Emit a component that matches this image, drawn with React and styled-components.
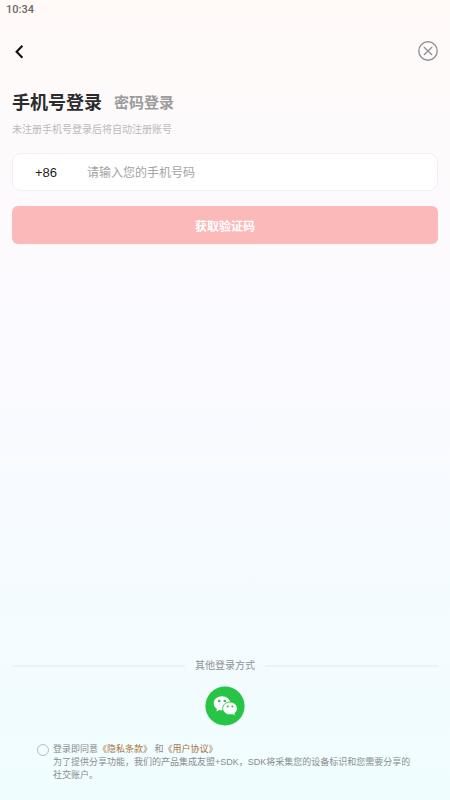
import React, { useState } from 'react';
import styled, { createGlobalStyle } from 'styled-components';

const App = () => {
    const [phone, setPhone] = useState('');
    const [agreed, setAgreed] = useState(false);
    return (
        <>
            <GlobalStyle />
            <Page>
                <StatusBar>10:34</StatusBar>
                <Nav>
                    <IconButton type="button" aria-label="返回">
                        <svg width="16" height="20" viewBox="0 0 16 20" fill="none" stroke="#111" strokeWidth="2.1">
                            <path d="M10.4 4.8 4.6 10.8l5.8 6" />
                        </svg>
                    </IconButton>
                    <IconButton type="button" aria-label="关闭">
                        <svg width="20" height="20" viewBox="0 0 20 20" fill="none" stroke="#939396" strokeWidth="1.4">
                            <circle cx="10" cy="10" r="9.2" />
                            <path d="m5.9 5.9 8.2 8.2M14.1 5.9l-8.2 8.2" />
                        </svg>
                    </IconButton>
                </Nav>
                <Form onSubmit={(e) => e.preventDefault()}>
                    <Tabs>
                        <Tab type="button" $active>手机号登录</Tab>
                        <Tab type="button">密码登录</Tab>
                    </Tabs>
                    <Hint>未注册手机号登录后将自动注册账号</Hint>
                    <PhoneField>
                        <label htmlFor="phone">+86</label>
                        <input
                            id="phone"
                            type="tel"
                            placeholder="请输入您的手机号码"
                            value={phone}
                            onChange={(e) => setPhone(e.target.value)}
                        />
                    </PhoneField>
                    <Submit type="submit">获取验证码</Submit>
                </Form>
                <Footer>
                    <Divider>其他登录方式</Divider>
                    <WechatButton type="button" aria-label="微信登录">
                        <WechatLogo />
                    </WechatButton>
                    <Agreement>
                        <input
                            id="agree"
                            type="checkbox"
                            checked={agreed}
                            onChange={(e) => setAgreed(e.target.checked)}
                        />
                        <label htmlFor="agree">
                            登录即同意<a href="#privacy">《隐私条款》</a> 和<a href="#terms">《用户协议》</a>
                            <br />
                            为了提供分享功能，我们的产品集成友盟+SDK，SDK将采集您的设备标识和您需要分享的社交账户。
                        </label>
                    </Agreement>
                </Footer>
            </Page>
        </>
    )
}

export default App

const WechatLogo = () => (
    <svg width="40" height="40" viewBox="0 0 40 40">
        <circle cx="20" cy="20" r="19.6" fill="#28c445" />
        <path
            fill="#fff"
            d="M17 10.2c-4.6 0-8.3 3.1-8.3 7 0 2.3 1.200 4.200 3.100 5.500l-.3 2.800 2.900-1.600c.8.200 1.700.3 2.600.3 4.600 0 8.300-3.100 8.300-7s-3.700-7-8.300-7z"
        />
        <path
            fill="#fff"
            stroke="#28c445"
            strokeWidth=".9"
            d="M32.300 22.400c0-3.600-3.300-6.400-7.300-6.400s-7.300 2.800-7.300 6.400 3.300 6.400 7.300 6.400c.9 0 1.700-.1 2.500-.4l2.800 1.700-.5-2.800c1.500-1.100 2.500-2.900 2.500-4.900z"
        />
        <g fill="#28c445">
            <circle cx="14.2" cy="15" r="1.3" />
            <circle cx="19.800" cy="15" r="1.300" />
            <circle cx="22.700" cy="20.600" r="1" />
            <circle cx="27.400" cy="20.600" r="1" />
        </g>
    </svg>
)

const GlobalStyle = createGlobalStyle`
    *{
        box-sizing: border-box;
    }
    body{
        margin: 0;
    }
    body, button, input{
        font-family: "Liberation Sans", "Noto Sans CJK SC", sans-serif;
    }
    button{
        padding: 0;
        border: none;
        background: none;
        cursor: pointer;
    }
    a{
        color: #a87440;
        text-decoration: none;
    }
`

const Page = styled.div`
    display: flex;
    flex-direction: column;
    min-height: 100vh;
    padding: 0 12px 18px;
    background: linear-gradient(180deg, #fffaf8 0%, #fdfafc 20%, #fbfaff 45%, #f5fbff 70%, #f2fcff 85%, #f0fdff 100%);
`

const StatusBar = styled.div`
    margin-left: -6px;
    font-family: Roboto, sans-serif;
    font-size: 11px;
    font-weight: 500;
    line-height: 20px;
    color: #6a6868;
`

const Nav = styled.nav`
    display: flex;
    align-items: center;
    justify-content: space-between;
    height: 62px;
`

const IconButton = styled.button`
    display: flex;
`

const Form = styled.form`
    display: flex;
    flex-direction: column;
`

const Tabs = styled.div`
    display: flex;
    align-items: center;
    gap: 12px;
    height: 38px;
`

const Tab = styled.button`
    font-size: ${props => props.$active ? '18px' : '15px'};
    font-weight: 700;
    color: ${props => props.$active ? '#2c2c2e' : '#9b9a9c'};
`

const Hint = styled.p`
    margin: 0 0 14px;
    font-size: 10px;
    line-height: 19px;
    color: #bbb9bc;
`

const PhoneField = styled.div`
    display: flex;
    align-items: center;
    height: 38px;
    border: 1px solid #f0eff2;
    border-radius: 9px;
    background: #fff;
    label{
        flex: none;
        width: 74px;
        padding-left: 22px;
        font-size: 13px;
        color: #222;
    }
    input{
        flex: 1;
        min-width: 0;
        height: 100%;
        padding: 2px 0 0;
        border: none;
        outline: none;
        background: none;
        font-size: 12px;
        color: #222;
    }
    input::placeholder{
        color: #a3a3a3;
    }
`

const Submit = styled.button`
    height: 38px;
    margin-top: 15px;
    border-radius: 6px;
    && {
        background: #fbb9ba;
    }
    font-size: 12px;
    font-weight: 700;
    color: #fff;
`

const Footer = styled.footer`
    display: flex;
    flex-direction: column;
    align-items: center;
    margin-top: auto;
`

const Divider = styled.div`
    display: flex;
    align-items: center;
    align-self: stretch;
    gap: 10px;
    font-size: 10px;
    line-height: 16px;
    color: #939393;
    &::before, &::after{
        content: '';
        flex: 1;
        height: 2px;
        background: #edf2f5;
    }
`

const WechatButton = styled.button`
    display: flex;
    margin: 12px 0 17px;
`

const Agreement = styled.div`
    display: flex;
    align-items: flex-start;
    align-self: stretch;
    gap: 4px;
    padding: 0 26px 0 25px;
    font-size: 9px;
    line-height: 13px;
    color: #8a8c8c;
    input{
        appearance: none;
        flex: none;
        width: 12px;
        height: 12px;
        margin: 1px 0 0;
        border: 1px solid #bbbebe;
        border-radius: 50%;
    }
    input:checked{
        background: #28c445;
    }
`
